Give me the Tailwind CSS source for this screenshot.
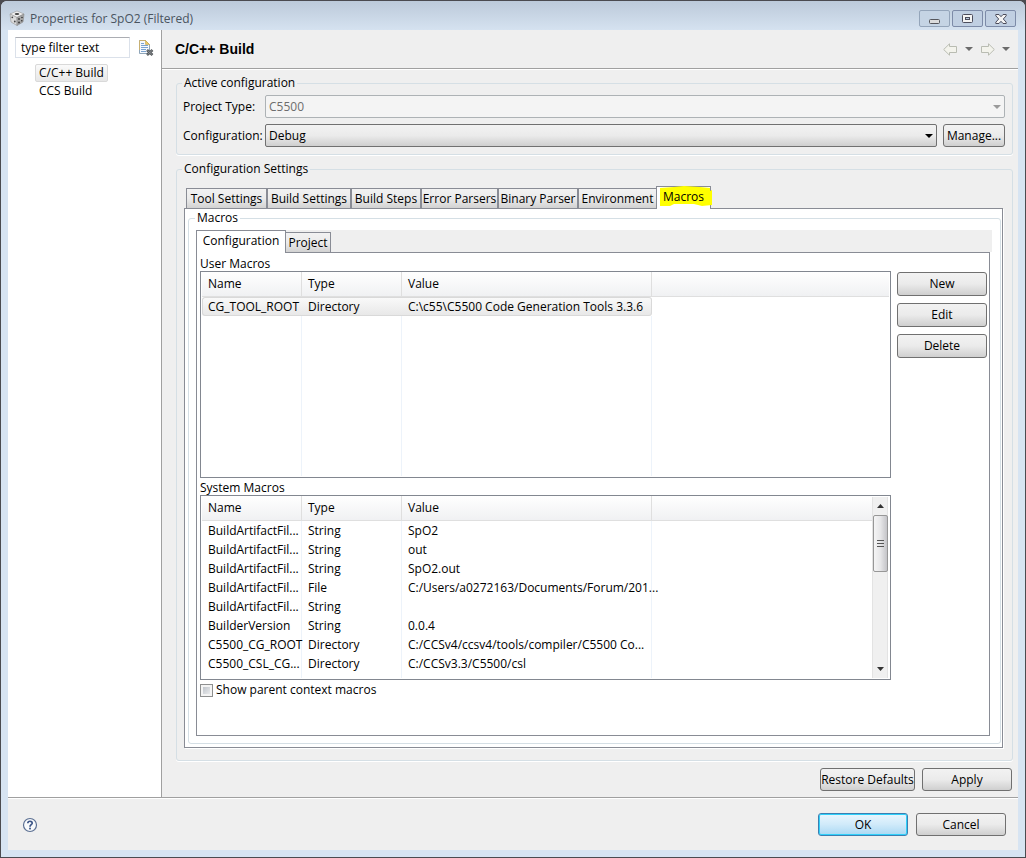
<!DOCTYPE html>
<html lang="en">
<head>
    <meta charset="UTF-8">
    <meta name="viewport" content="width=device-width, initial-scale=1.0">
    <title>Properties for SpO2 (Filtered)</title>
    <script src="https://cdn.jsdelivr.net/npm/@tailwindcss/browser@4"></script>
</head>
<body class="min-h-screen flex flex-col bg-[#4b4b50] font-['Open_Sans','Noto_Sans',sans-serif] text-[12px] leading-[16px] text-black">
    <div class="flex-1 flex flex-col m-px rounded-t-md bg-[#d7e4f2]">
        <!-- Title bar -->
        <header class="h-[29px] flex items-center gap-1 pl-2 pr-[9px] rounded-t-md bg-linear-to-b from-[#bccada] to-[#d5e2f0] text-[#4a545f]">
            <svg class="size-4 mt-1" viewBox="0 0 16 16">
                <path d="M8 1 15 4 8 7.500 1 4Z" fill="#f0f0f0" stroke="#999" stroke-width=".6"/>
                <path d="M1 4 8 7.500V15.500L2 12Z" fill="#dcdcdc" stroke="#999" stroke-width=".6"/>
                <path d="M15 4 8 7.500V15.500L14 12Z" fill="#a6a6a6" stroke="#888" stroke-width=".6"/>
                <ellipse cx="8" cy="4" rx="2.300" ry="1" fill="#444"/>
                <circle cx="3.300" cy="7.300" r=".9" fill="#444"/><circle cx="5.800" cy="11.500" r=".9" fill="#444"/>
                <circle cx="10" cy="9" r=".9" fill="#333"/><circle cx="13" cy="7.500" r=".8" fill="#333"/>
                <circle cx="10" cy="12.500" r=".9" fill="#333"/><circle cx="12.800" cy="10.800" r=".8" fill="#333"/>
            </svg>
            <h1 class="flex-1 mt-1.5 ml-px">Properties for SpO2 (Filtered)</h1>
            <div class="flex gap-0.5 mt-1.5">
                <button aria-label="Minimize" class="w-[31px] h-[17px] flex items-center justify-center rounded-xs border border-[#94a5ba] bg-[#c5d4e4]">
                    <svg class="w-[11px] h-[13px]" viewBox="0 0 11 13"><rect x=".5" y="7.500" width="10" height="4" rx="1" fill="#dcdcdc" stroke="#55565c"/></svg>
                </button>
                <button aria-label="Maximize" class="w-[31px] h-[17px] flex items-center justify-center rounded-xs border border-[#7d8ba8] bg-[#c0cfe2]">
                    <svg class="w-[11px] h-[9px]" viewBox="0 0 11 9"><rect x=".5" y=".5" width="10" height="8" rx="1" fill="#f4f4f4" stroke="#4c4d5c"/><rect x="3.500" y="3.500" width="4" height="2" fill="#b8c8dc" stroke="#4c4d5c"/></svg>
                </button>
                <button aria-label="Close" class="w-[31px] h-[17px] flex items-center justify-center rounded-xs border border-[#7d8ba8] bg-[#c0cfe2]">
                    <svg class="w-[12px] h-[10px]" viewBox="0 0 12 10"><path d="M.8.5H4L6 2.700 8 .5H11.200V1.800L8.300 5 11.200 8.200V9.500H8L6 7.300 4 9.500H.8V8.200L3.700 5 .8 1.800Z" fill="#f4f4f4" stroke="#4c4d5c"/></svg>
                </button>
            </div>
        </header>

        <div class="flex-1 flex flex-col mx-[7px] mb-[7px] bg-[#efefef]">
            <div class="flex-1 flex border-b border-[#a0a0a0]">
                <!-- Page list -->
                <aside class="w-[154px] shrink-0 bg-white border-r border-[#a0a0a0] pl-[7px] pt-[7px]">
                    <div class="flex items-center gap-2">
                        <input type="text" aria-label="Filter" value="type filter text" class="w-[115px] h-[21px] pl-[5px] bg-white border border-[#dbe1ea] border-t-[#abadb3]">
                        <button aria-label="Clear filter">
                            <svg class="size-4" viewBox="0 0 16 16">
                                <path d="M1.500.5H7.500L11.500 4.500V13.500H1.500Z" fill="#f6f9fd" stroke="#8fa5b8"/>
                                <path d="M1.500 10V.5H7.500L11.500 4.500" fill="none" stroke="#c8b072"/>
                                <path d="M7.500.5V4.500H11.500Z" fill="#ecc964" stroke="#c8a850" stroke-width=".6"/>
                                <path d="M3 3.500H6M3 5.500H10M3 7.500H10M3 9.500H8M3 11.500H8" stroke="#7ba3cf"/>
                                <path d="M9 10 14.500 15M14.500 10 9 15" stroke="#55595c" stroke-width="2.600"/>
                                <path d="M9.500 10.500 14 14.500M14 10.500 9.500 14.500" stroke="#93989c" stroke-width=".8"/>
                            </svg>
                        </button>
                    </div>
                    <ul class="pl-5 pt-1.5">
                        <li class="h-[19px]"><a href="#" class="inline-block h-[18px] px-[3px] rounded-xs border border-[#d9d9d9] bg-linear-to-b from-[#fafafa] to-[#e7e7e7]">C/C++ Build</a></li>
                        <li><a href="#" class="inline-block px-1">CCS Build</a></li>
                    </ul>
                </aside>

                <main class="flex-1 min-w-0 flex flex-col">
                    <div class="h-[39px] shrink-0 flex items-center pl-[13px] pr-2 border-b border-[#a0a0a0] shadow-[0_1px_0_#fff]">
                        <h2 class="flex-1 font-['Liberation_Sans',sans-serif] font-bold text-[14px]">C/C++ Build</h2>
                        <div class="flex items-center gap-[7px]">
                            <button aria-label="Back">
                                <svg class="w-[15px] h-[13px]" viewBox="0 0 15 13"><path d="M.7 6.500 6.500.8V3.500H13.500V9.500H6.500V12.200Z" fill="#f3f3ec" stroke="#b9bcb2"/></svg>
                            </button>
                            <button aria-label="Back history">
                                <svg class="w-[8px] h-[4px]" viewBox="0 0 8 4"><path d="M0 0H8L4 4Z" fill="#6b6b6b"/></svg>
                            </button>
                            <button aria-label="Forward">
                                <svg class="w-[15px] h-[13px]" viewBox="0 0 15 13"><path d="M14.300 6.500 8.500.8V3.500H1.500V9.500H8.500V12.200Z" fill="#f3f3ec" stroke="#b9bcb2"/></svg>
                            </button>
                            <button aria-label="Forward history">
                                <svg class="w-[8px] h-[4px]" viewBox="0 0 8 4"><path d="M0 0H8L4 4Z" fill="#6b6b6b"/></svg>
                            </button>
                        </div>
                    </div>

                    <div class="flex-1 flex flex-col gap-1.5 pl-[14px] pr-[5px] pt-1.5 pb-1.5">
                        <fieldset class="rounded-[3px] border border-[#d5dfe5] shadow-[0_1px_0_#fff] pl-1.5 pr-[7px] pt-1 pb-[7px]">
                            <legend class="px-0.5 -ml-px">Active configuration</legend>
                            <div class="grid grid-cols-[82px_1fr] gap-y-1.5 items-center">
                                <label for="projectType">Project Type:</label>
                                <div class="relative h-[23px]">
                                    <select id="projectType" disabled class="appearance-none w-full h-full pl-[3px] rounded-xs border border-[#adb2b5] bg-[#f4f4f4] text-[#6d6d6d]">
                                        <option>C5500</option>
                                    </select>
                                    <svg class="absolute right-1 top-[10px] w-[8px] h-[4px] pointer-events-none" viewBox="0 0 8 4"><path d="M0 0H8L4 4Z" fill="#9a9a9a"/></svg>
                                </div>
                                <label for="configuration">Configuration:</label>
                                <div class="flex gap-1.5 h-[23px]">
                                    <div class="relative flex-1">
                                        <select id="configuration" class="appearance-none w-full h-full pl-[3px] rounded-xs border border-[#707070] bg-linear-to-b from-[#f2f2f2] from-0% via-[#ebebeb] via-50% to-[#cfcfcf]">
                                            <option>Debug</option>
                                        </select>
                                        <svg class="absolute right-1 top-[10px] w-[8px] h-[4px] pointer-events-none" viewBox="0 0 8 4"><path d="M0 0H8L4 4Z" fill="#000"/></svg>
                                    </div>
                                    <button class="w-[62px] rounded-[3px] border border-[#707070] bg-linear-to-b from-[#f2f2f2] via-[#ebebeb] to-[#cfcfcf]">Manage...</button>
                                </div>
                            </div>
                        </fieldset>

                        <fieldset class="flex-1 flex flex-col min-w-0 rounded-[3px] border border-[#d5dfe5] shadow-[0_1px_0_#fff] pl-[7px] pr-[9px] pt-[9px] pb-3">
                            <legend class="px-0.5 -ml-0.5">Configuration Settings</legend>
                            <div role="tablist" class="flex items-end h-[22px] pl-0.5">
                                <button role="tab" class="w-[81px] h-5 border border-b-0 border-[#898c95] bg-linear-to-b from-[#f2f2f2] via-[#ebebeb] to-[#d2d2d2]">Tool Settings</button>
                                <button role="tab" class="w-[84px] h-5 border border-b-0 border-[#898c95] bg-linear-to-b from-[#f2f2f2] via-[#ebebeb] to-[#d2d2d2]">Build Settings</button>
                                <button role="tab" class="w-[70px] h-5 border border-b-0 border-[#898c95] bg-linear-to-b from-[#f2f2f2] via-[#ebebeb] to-[#d2d2d2]">Build Steps</button>
                                <button role="tab" class="w-[77px] h-5 border border-b-0 border-[#898c95] bg-linear-to-b from-[#f2f2f2] via-[#ebebeb] to-[#d2d2d2]">Error Parsers</button>
                                <button role="tab" class="w-[80px] h-5 border border-b-0 border-[#898c95] bg-linear-to-b from-[#f2f2f2] via-[#ebebeb] to-[#d2d2d2]">Binary Parser</button>
                                <button role="tab" class="w-[78px] h-5 border border-r-0 border-b-0 border-[#898c95] bg-linear-to-b from-[#f2f2f2] via-[#ebebeb] to-[#d2d2d2]">Environment</button>
                                <button role="tab" aria-selected="true" class="relative w-[55px] h-[23px] -mb-px pb-0.5 border border-b-0 border-[#898c95] bg-white">
                                    <!-- marker stroke behind the label -->
                                    <svg class="absolute left-[3px] -top-px w-[52px] h-5" viewBox="0 0 52 20"><path d="M0 2 14 1 24 0 40 1 50 2V5L52 4V19L42 20 34 18 14 18 10 20H0Z" fill="#ff0"/></svg>
                                    <span class="relative">Macros</span>
                                </button>
                            </div>

                            <div class="flex-1 flex flex-col border border-[#898c95] bg-white px-[3px] pr-px pt-px pb-[3px] shadow-[1px_1px_0_#fff]">
                                <fieldset class="flex-1 flex flex-col min-w-0 rounded-[3px] border border-[#d5dfe5] pl-[7px] pr-2.5 pt-1 pb-[7px]">
                                    <legend class="px-0.5 -ml-px">Macros</legend>
                                    <div role="tablist" class="flex items-end h-[22px] -mr-0.5 bg-[#efefef]">
                                        <button role="tab" aria-selected="true" class="relative w-[90px] h-[23px] -mb-px pb-0.5 border border-b-0 border-[#898c95] bg-white">Configuration</button>
                                        <button role="tab" class="w-[45px] h-5 border border-l-0 border-b-0 border-[#898c95] bg-linear-to-b from-[#f2f2f2] via-[#ebebeb] to-[#d2d2d2]">Project</button>
                                    </div>
                                    <div class="flex-1 flex gap-1.5 border border-[#898c95] px-[3px] pr-0.5 pt-[3px]">
                                        <div class="flex-1 min-w-0">
                                            <h3 class="leading-[15px]">User Macros</h3>
                                            <div class="h-[207px] border border-[#828790] p-px pt-0">
                                                <table class="w-full h-full table-fixed border-separate border-spacing-0 text-left">
                                                    <thead>
                                                        <tr class="h-[25px]">
                                                            <th class="w-[100px] pl-1.5 font-normal border-r border-b border-[#dfdfdf] bg-linear-to-b from-white to-[#f0f1f3]">Name</th>
                                                            <th class="w-[100px] pl-1.5 font-normal border-r border-b border-[#dfdfdf] bg-linear-to-b from-white to-[#f0f1f3]">Type</th>
                                                            <th class="w-[250px] pl-1.5 font-normal border-r border-b border-[#dfdfdf] bg-linear-to-b from-white to-[#f0f1f3]">Value</th>
                                                            <th class="border-b border-[#dfdfdf] bg-linear-to-b from-white to-[#f0f1f3]"></th>
                                                        </tr>
                                                    </thead>
                                                    <tbody>
                                                        <tr class="h-[19px]">
                                                            <td class="pl-[5px] truncate rounded-l-[3px] border-y border-l border-[#d9d9d9] bg-linear-to-b from-[#f9f9f9] to-[#e8e8e8]">CG_TOOL_ROOT</td>
                                                            <td class="pl-1.5 truncate border-y border-[#d9d9d9] bg-linear-to-b from-[#f9f9f9] to-[#e8e8e8]">Directory</td>
                                                            <td class="pl-1.5 truncate rounded-r-[3px] border-y border-r border-[#d9d9d9] bg-linear-to-b from-[#f9f9f9] to-[#e8e8e8]">C:\c55\C5500 Code Generation Tools 3.3.6</td>
                                                            <td></td>
                                                        </tr>
                                                        <tr>
                                                            <td class="border-r border-[#edf3fa]"></td>
                                                            <td class="border-r border-[#edf3fa]"></td>
                                                            <td class="border-r border-[#edf3fa]"></td>
                                                            <td></td>
                                                        </tr>
                                                    </tbody>
                                                </table>
                                            </div>

                                            <h3 class="mt-0.5 leading-[15px]">System Macros</h3>
                                            <div class="flex h-[185px] border border-[#828790] p-px pt-0">
                                                <table class="flex-1 w-full h-full table-fixed border-separate border-spacing-0 text-left">
                                                    <thead>
                                                        <tr class="h-[25px]">
                                                            <th class="w-[100px] pl-1.5 font-normal border-r border-b border-[#dfdfdf] bg-linear-to-b from-white to-[#f0f1f3]">Name</th>
                                                            <th class="w-[100px] pl-1.5 font-normal border-r border-b border-[#dfdfdf] bg-linear-to-b from-white to-[#f0f1f3]">Type</th>
                                                            <th class="w-[250px] pl-1.5 font-normal border-r border-b border-[#dfdfdf] bg-linear-to-b from-white to-[#f0f1f3]">Value</th>
                                                            <th class="border-b border-[#dfdfdf] bg-linear-to-b from-white to-[#f0f1f3]"></th>
                                                        </tr>
                                                    </thead>
                                                    <tbody id="systemMacros"></tbody>
                                                </table>
                                                <div class="w-4 mt-px mr-px flex flex-col items-center border-x border-[#e3e3e3] bg-[#f0f0f0]">
                                                    <button aria-label="Scroll up" class="w-full h-[18px] flex items-center justify-center">
                                                        <svg class="w-[7px] h-[4px]" viewBox="0 0 7 4"><path d="M0 4H7L3.500 0Z" fill="#333"/></svg>
                                                    </button>
                                                    <div class="w-[15px] h-[57px] flex items-center justify-center rounded-[2px] border border-[#979797] bg-linear-to-r from-[#f5f5f5] via-[#e6e6e8] to-[#c4c4c8]">
                                                        <svg class="w-[7px] h-[9px]" viewBox="0 0 7 9"><path d="M0 1.500H7M0 4.500H7M0 7.500H7" stroke="#555"/></svg>
                                                    </div>
                                                    <button aria-label="Scroll down" class="w-full h-[18px] mt-auto flex items-center justify-center">
                                                        <svg class="w-[7px] h-[4px]" viewBox="0 0 7 4"><path d="M0 0H7L3.500 4Z" fill="#333"/></svg>
                                                    </button>
                                                </div>
                                            </div>
                                            <label class="mt-0.5 flex items-center gap-[3px]">
                                                <input type="checkbox" class="appearance-none size-[13px] border border-[#8e8f8f] bg-linear-to-br from-[#b4bac2] to-[#f6f6f6] shadow-[inset_0_0_0_2px_#f4f4f4]">
                                                Show parent context macros
                                            </label>
                                        </div>
                                        <div class="w-[90px] flex flex-col gap-[7px] pt-4">
                                            <button class="h-6 rounded-[3px] border border-[#707070] bg-linear-to-b from-[#f2f2f2] via-[#ebebeb] to-[#cfcfcf]">New</button>
                                            <button class="h-6 rounded-[3px] border border-[#707070] bg-linear-to-b from-[#f2f2f2] via-[#ebebeb] to-[#cfcfcf]">Edit</button>
                                            <button class="h-6 rounded-[3px] border border-[#707070] bg-linear-to-b from-[#f2f2f2] via-[#ebebeb] to-[#cfcfcf]">Delete</button>
                                        </div>
                                    </div>
                                </fieldset>
                            </div>
                        </fieldset>

                        <div class="flex justify-end gap-[7px] pt-px pr-px">
                            <button class="w-[95px] h-[23px] rounded-[3px] border border-[#707070] bg-linear-to-b from-[#f2f2f2] via-[#ebebeb] to-[#cfcfcf]">Restore Defaults</button>
                            <button class="w-[90px] h-[23px] rounded-[3px] border border-[#707070] bg-linear-to-b from-[#f2f2f2] via-[#ebebeb] to-[#cfcfcf]">Apply</button>
                        </div>
                    </div>
                </main>
            </div>

            <!-- Dialog buttons -->
            <footer class="h-[52px] flex items-center gap-2 pl-[14px] pr-3 border-t border-white">
                <button aria-label="Help">
                    <svg class="size-4" viewBox="0 0 16 16">
                        <circle cx="8" cy="8" r="6.500" fill="#f8fafc" stroke="#5b6f92" stroke-width="1.200"/>
                        <path d="M5.800 6.300C5.800 3.500 10.300 3.600 10.200 6.200 10.100 7.700 8 7.800 8 9.700" fill="none" stroke="#3c5587" stroke-width="1.700"/>
                        <rect x="7.100" y="10.700" width="1.800" height="1.700" fill="#3c5587"/>
                    </svg>
                </button>
                <button class="ml-auto w-[90px] h-[23px] rounded-[3px] border border-[#3c7fb1] bg-linear-to-b from-[#eaf6fd] via-[#d0eafa] to-[#a9d8f3] shadow-[inset_0_0_0_1px_#2fd0fa]">OK</button>
                <button class="w-[90px] h-[23px] rounded-[3px] border border-[#707070] bg-linear-to-b from-[#f2f2f2] via-[#ebebeb] to-[#cfcfcf]">Cancel</button>
            </footer>
        </div>
    </div>

    <script>
        const macros = [
            ['BuildArtifactFil...', 'String', 'SpO2'],
            ['BuildArtifactFil...', 'String', 'out'],
            ['BuildArtifactFil...', 'String', 'SpO2.out'],
            ['BuildArtifactFil...', 'File', 'C:/Users/a0272163/Documents/Forum/201...'],
            ['BuildArtifactFil...', 'String', ''],
            ['BuilderVersion', 'String', '0.0.4'],
            ['C5500_CG_ROOT', 'Directory', 'C:/CCSv4/ccsv4/tools/compiler/C5500 Co...'],
            ['C5500_CSL_CG...', 'Directory', 'C:/CCSv3.3/C5500/csl']
        ];

        const body = document.getElementById('systemMacros');
        macros.forEach(row => {
            body.innerHTML += `
                <tr class="h-[19px]">
                    ${row.map(text => `<td class="pl-1.5 whitespace-nowrap border-r border-[#edf3fa]">${text}</td>`).join('')}
                    <td></td>
                </tr>
            `;
        });
        // Rest of the list below the last row
        body.innerHTML += `
            <tr>
                <td class="border-r border-[#edf3fa]"></td>
                <td class="border-r border-[#edf3fa]"></td>
                <td class="border-r border-[#edf3fa]"></td>
                <td></td>
            </tr>
        `;
    </script>
</body>
</html>
